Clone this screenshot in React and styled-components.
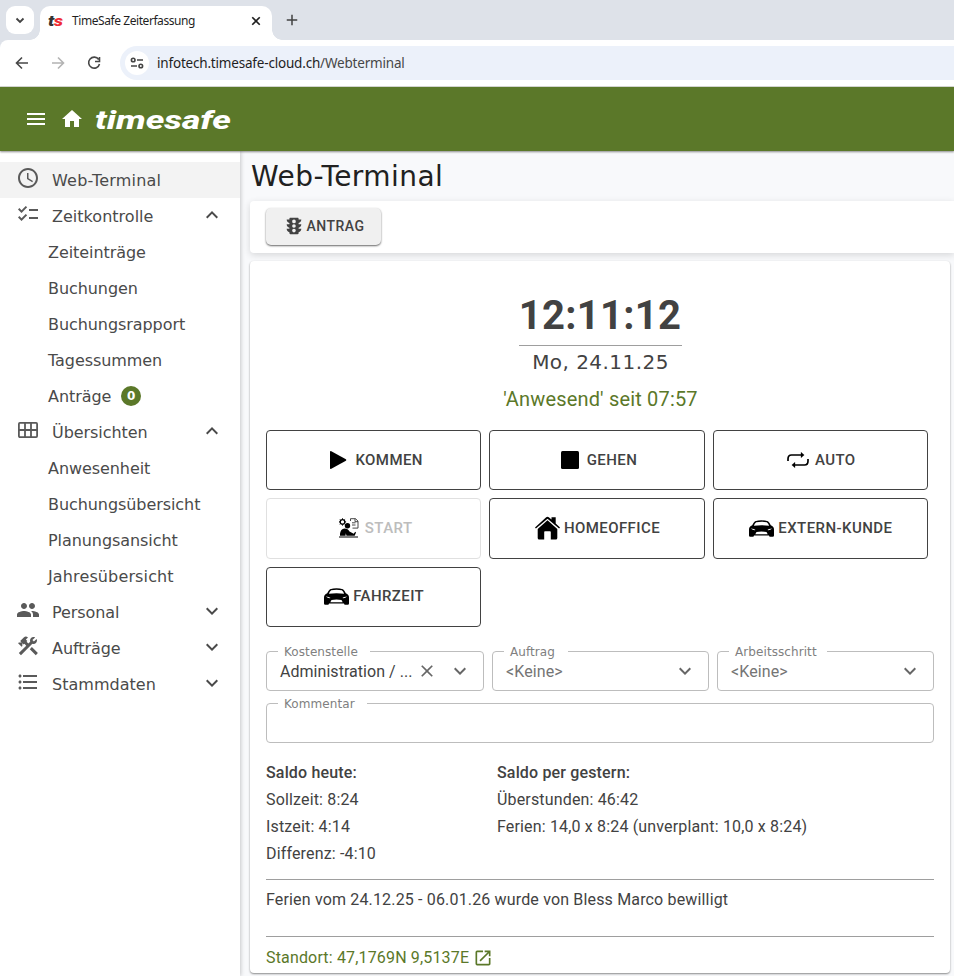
import React from "react";
import styled, { createGlobalStyle } from "styled-components";
import {
  MdAccessTime,
  MdChecklist,
  MdConstruction,
  MdExpandLess,
  MdExpandMore,
  MdFormatListBulleted,
  MdHome,
  MdMenu,
  MdOpenInNew,
  MdPeople,
  MdTraffic,
  MdClose,
} from "react-icons/md";

const GREEN = "#5b7829";

const GlobalStyle = createGlobalStyle`
  * { box-sizing: border-box; }
  body {
    margin: 0;
    overflow: hidden;
    background-color: #f8f9fb;
    color: #424242;
    font-family: Roboto, sans-serif;
  }
  svg { display: block; flex-shrink: 0; }
`;

const Page = styled.div`
  display: flex;
  flex-direction: column;
  height: 976px;
  overflow: hidden;
`;

/* browser chrome */

const TabStrip = styled.div`
  display: flex;
  height: 40px;
  padding: 6px 6px 0;
  background-color: #dee2e9;
`;

const TabSearch = styled.div`
  display: flex;
  align-items: center;
  justify-content: center;
  width: 28px;
  height: 28px;
  border-radius: 9px;
  background-color: white;
`;

const Tab = styled.div`
  position: relative;
  display: flex;
  align-items: center;
  width: 232px;
  height: 34px;
  margin-left: 6px;
  padding: 0 10px 5px 8px;
  border-radius: 10px 10px 0 0;
  background-color: white;
  font-family: "Noto Sans", sans-serif;
  font-size: 12px;
  color: #1f1f1f;

  &::before,
  &::after {
    content: "";
    position: absolute;
    bottom: 0;
    width: 10px;
    height: 10px;
  }
  &::before {
    left: -10px;
    background: radial-gradient(circle at 0 0, transparent 9.5px, white 10px);
  }
  &::after {
    right: -10px;
    background: radial-gradient(circle at 100% 0, transparent 9.5px, white 10px);
  }
`;

const Favicon = styled.span`
  display: flex;
  align-items: center;
  width: 16px;
  height: 20px;
  transform: scaleX(1.25);
  transform-origin: left;
  font-family: Roboto, sans-serif;
  font-size: 15px;
  font-style: italic;
  font-weight: 900;
  line-height: 20px;
  letter-spacing: -0.4px;
  color: #333;
`;

const FaviconAccent = styled.span`
  color: #ee2b33;
`;

const TabTitle = styled.span`
  flex-grow: 1;
  margin-left: 8px;
  letter-spacing: -0.43px;
`;

const NewTab = styled.div`
  display: flex;
  align-items: center;
  height: 28px;
  margin-left: 14px;
`;

const ToolbarBack = styled.div`
  height: 47px;
  background-color: #dee2e9;
`;

const Toolbar = styled.div`
  display: flex;
  align-items: center;
  height: 47px;
  padding-left: 14px;
  border-bottom: 1px solid #d9dbd6;
  border-top-left-radius: 8px;
  background-color: white;
`;

const NavIcon = styled.div`
  width: 16px;
  margin-right: 20px;
  color: ${(props) => (props.$disabled ? "#b3b3b3" : "#474747")};
`;

const AddressBar = styled.div`
  display: flex;
  align-items: center;
  flex-grow: 1;
  height: 34px;
  margin-left: -2px;
  padding-left: 5px;
  border-radius: 17px 0 0 17px;
  background-color: #ecf1fa;
  font-family: "Noto Sans", sans-serif;
  font-size: 13.5px;
  letter-spacing: -0.19px;
  color: #1f1f1f;
`;

const SiteInfo = styled.div`
  display: flex;
  align-items: center;
  justify-content: center;
  width: 24px;
  height: 24px;
  margin-right: 8px;
  border-radius: 50%;
  background-color: white;
`;

const UrlPath = styled.span`
  color: #474747;
`;

/* application */

const HeaderBar = styled.header`
  display: flex;
  align-items: center;
  flex-shrink: 0;
  height: 64px;
  padding-left: 24px;
  background-color: ${GREEN};
  color: white;
  box-shadow: 0 1px 2px rgba(0, 0, 0, 0.45);
  z-index: 2;
`;

const HomeButton = styled.div`
  margin: 0 10px 0 12px;
`;

const Body = styled.div`
  display: flex;
  flex-grow: 1;
  min-height: 0;
`;

const Sidebar = styled.nav`
  width: 240px;
  flex-shrink: 0;
  padding-top: 11px;
  background-color: white;
  box-shadow: 1px 0 4px rgba(0, 0, 0, 0.2);
`;

const SidebarRow = styled.div`
  display: flex;
  align-items: center;
  height: 36px;
  padding: 0 16px;
  padding-left: ${(props) => (props.$child ? 48 : 16)}px;
  background-color: ${(props) => (props.$active ? "#f3f3f3" : "transparent")};
  font-family: "DejaVu Sans", Verdana, sans-serif;
  font-size: 16px;
  color: #4a4a4a;
`;

const SidebarIcon = styled.div`
  width: 24px;
  height: 28px;
  margin-right: 12px;
  color: #5a5a5a;
`;

const SidebarLabel = styled.span`
  letter-spacing: ${(props) => props.$spacing || -0.07}px;
`;

const SidebarArrow = styled.div`
  height: 24px;
  margin: 0 0 3px auto;
`;

const Badge = styled.span`
  display: flex;
  align-items: center;
  justify-content: center;
  width: 20px;
  height: 20px;
  margin-left: 10px;
  border-radius: 50%;
  background-color: ${GREEN};
  color: white;
  font-size: 12px;
  font-weight: bold;
`;

const Main = styled.main`
  flex-grow: 1;
  min-width: 0;
  padding: 0 0 0 10px;
`;

const Title = styled.h1`
  height: 50px;
  margin: 0;
  padding-left: 1px;
  font-family: "DejaVu Sans", Verdana, sans-serif;
  font-size: 28px;
  font-weight: normal;
  line-height: 52px;
  letter-spacing: 0.45px;
  color: #212121;
`;

const ActionBar = styled.div`
  display: flex;
  height: 52px;
  padding: 7px 16px;
  border-radius: 4px 0 0 4px;
  background-color: white;
  box-shadow: 0 2px 7px rgba(0, 0, 0, 0.14);
`;

const RequestButton = styled.button`
  display: flex;
  align-items: center;
  justify-content: center;
  width: 115px;
  height: 37px;
  padding: 0 0 1px;
  border: 0;
  border-radius: 5px;
  background-color: #f0f0f0;
  box-shadow: 0 1px 2px rgba(0, 0, 0, 0.6);
  color: #424242;
  font-family: Roboto, sans-serif;
  font-size: 14px;
  font-weight: 500;
  letter-spacing: 0.45px;
  gap: 2px;
`;

const Card = styled.section`
  width: 700px;
  height: 712px;
  margin-top: 8px;
  padding: 0 16px;
  border-radius: 4px;
  background-color: white;
  box-shadow: 0 1px 2px rgba(0, 0, 0, 0.45);
`;

const Clock = styled.div`
  display: flex;
  flex-direction: column;
  align-items: center;
  height: 169px;
  padding-top: 25px;
`;

const Time = styled.div`
  width: 163px;
  height: 60px;
  border-bottom: 1px solid #9e9e9e;
  font-size: 40px;
  font-weight: bold;
  line-height: 60px;
  text-align: center;
  letter-spacing: 0.3px;
  white-space: nowrap;
`;

const DateLine = styled.div`
  padding-left: 1px;
  font-family: "DejaVu Sans", Verdana, sans-serif;
  font-size: 20px;
  line-height: 32px;
  letter-spacing: 0.45px;
`;

const Status = styled.div`
  margin-top: 4px;
  padding-left: 1px;
  font-size: 20px;
  line-height: 34px;
  letter-spacing: 0.17px;
  color: ${GREEN};
`;

const ButtonGrid = styled.div`
  display: grid;
  grid-template-columns: repeat(3, 1fr);
  grid-auto-rows: 60.4px;
  gap: 8px;
  width: 662px;
`;

const BookingButton = styled.button`
  display: flex;
  align-items: center;
  justify-content: center;
  gap: ${(props) => props.$gap}px;
  padding: 0 0 1px ${(props) => props.$indent}px;
  border: 1px solid ${(props) => (props.disabled ? "#e0e0e0" : "#424242")};
  border-radius: 4px;
  background-color: white;
  color: ${(props) => (props.disabled ? "#bdbdbd" : "#424242")};
  font-family: Roboto, sans-serif;
  font-size: 15px;
  font-weight: 500;
  letter-spacing: 0.42px;

  svg {
    color: black;
  }
`;

const Fields = styled.div`
  display: grid;
  grid-template-columns: 218px 217px 217px;
  gap: 6px 8px;
  margin-top: 18px;
`;

const Outline = styled.fieldset`
  display: flex;
  align-items: flex-start;
  min-width: 0;
  height: 46px;
  margin: 0;
  padding: 0 11px;
  border: 1px solid #bdbdbd;
  border-radius: 4px;
  grid-column: ${(props) => (props.$wide ? "1 / -1" : "auto")};
`;

const Legend = styled.legend`
  width: ${(props) => props.$width}px;
  height: 12px;
  padding: 0 6px;
  font-family: "DejaVu Sans", Verdana, sans-serif;
  font-size: 12px;
  line-height: 14px;
  letter-spacing: 0.08px;
  white-space: nowrap;
  color: #808080;
`;

const FieldRow = styled.div`
  display: flex;
  align-items: center;
  width: 100%;
  height: 28px;
  padding-left: 2px;
`;

const FieldValue = styled.span`
  flex-grow: 1;
  font-size: 16px;
  letter-spacing: ${(props) => (props.$empty ? 0.1 : 0.04)}px;
  white-space: nowrap;
  color: ${(props) => (props.$empty ? "#757575" : "#424242")};
`;

const FieldIcon = styled.div`
  margin-left: ${(props) => props.$gap || 0}px;
  color: #666;
`;

const Balances = styled.div`
  display: grid;
  grid-template-columns: 231px 1fr;
  height: 121px;
  margin-top: 16px;
  border-bottom: 1px solid #9e9e9e;
  font-size: 16px;
  line-height: 27px;
  letter-spacing: 0.16px;
`;

const Heading = styled.div`
  font-weight: 500;
`;

const Message = styled.div`
  height: 57px;
  border-bottom: 1px solid #9e9e9e;
  font-size: 16px;
  line-height: 40px;
  letter-spacing: 0.16px;
`;

const Location = styled.div`
  display: flex;
  align-items: center;
  height: 41px;
  font-size: 16px;
  letter-spacing: 0.16px;
  color: ${GREEN};
  gap: 4px;
`;

const Logo = () => (
  <svg width="138" height="28" viewBox="0 0 138 28">
    <text
      x="1"
      y="23.5"
      fill="white"
      fontFamily="Roboto"
      fontSize="25"
      fontWeight="800"
      fontStyle="italic"
      textLength="136"
      lengthAdjust="spacingAndGlyphs"
    >
      timesafe
    </text>
  </svg>
);

const Stroke = ({ size = 16, width = 1.8, d }) => (
  <svg width={size} height={size} viewBox="0 0 16 16" fill="none" stroke="currentColor" strokeWidth={width}>
    <path d={d} />
  </svg>
);

const TuneIcon = () => (
  <svg width="14" height="14" viewBox="0 0 14 14" fill="none" stroke="#444" strokeWidth="1.6">
    <circle cx="3.2" cy="4" r="1.8" />
    <path d="M7 4h6M1 10h6" />
    <circle cx="10.8" cy="10" r="1.8" />
  </svg>
);

const ModuleIcon = () => (
  <svg width="24" height="24" viewBox="0 0 24 24" fill="none" stroke="currentColor" strokeWidth="1.8">
    <rect x="2.900" y="4.900" width="18.200" height="14.200" rx="1" />
    <path d="M9 5v14M15 5v14M3 12h18" />
  </svg>
);

const PlayIcon = () => (
  <svg width="20" height="20" viewBox="0 0 20 20" fill="currentColor">
    <path d="M2 2q0-1.4 1.3-.8l14.6 8q1 .8 0 1.6l-14.6 8Q2 19.4 2 18z" />
  </svg>
);

const StopIcon = () => (
  <svg width="18" height="18" viewBox="0 0 18 18" fill="currentColor">
    <rect width="18" height="18" rx="1.5" />
  </svg>
);

const LoopIcon = () => (
  <svg width="22" height="18" viewBox="0 0 22 18" fill="none" stroke="currentColor" strokeWidth="1.7">
    <path d="M1 10V8q0-4 3.500-4H16M21 8v2q0 4-3.500 4H6" />
    <path d="M14 1.300 17.200 4 14 6.700zM8 11.300 4.800 14 8 16.700z" fill="currentColor" strokeWidth=".3" />
  </svg>
);

const CarIcon = () => (
  <svg width="25" height="17" viewBox="0 0 25 17" fill="currentColor">
    <path
      fillRule="evenodd"
      d="M6 1.200Q12.500-.6 19 1.200q1.700 1.500 2.800 4.100Q25 6.500 25 9.500v6q0 1.300-1.300 1.300h-2.500q-1.200 0-1.200-1.300H5q0 1.300-1.200 1.300H1.300Q0 16.800 0 15.500v-6Q0 6.500 3.200 5.300 4.300 2.700 6 1.200zM7.200 2.300Q5.500 3.700 4.900 5.700q7.600-.8 15.200 0-.6-2-2.300-3.400-5.300-1.200-10.600 0zM1.800 8.400q2.200 2 4.700 1.700-.9-1.700-4.700-1.700zM23.200 8.400q-3.800 0-4.700 1.700 2.500.3 4.700-1.700zM7.500 12 6.300 14.200h12.400L17.500 12q-5-1-10 0z"
    />
  </svg>
);

const HouseIcon = () => (
  <svg width="25" height="24" viewBox="0 0 25 24" fill="currentColor">
    <path d="M12.500 4.200 22.300 13V22q0 1.500-1.500 1.500h-5V16q0-.8-.8-.8h-5q-.8 0-.8.8v7.500H4.200q-1.500 0-1.500-1.500v-9z" />
    <path d="M0 11.600 11.200 1.200q1.300-1 2.600 0l2.700 2.400V1.200h4.200v6.200l4.300 4.200-.9 1L12.500 2.700.9 12.600z" />
  </svg>
);

const WorkIcon = () => (
  <svg width="20" height="20" viewBox="0 0 20 20" fill="currentColor">
    <circle cx="3.500" cy="3.900" r="2.300" fill="none" stroke="currentColor" strokeWidth="1.300" />
    <path
      d="M3.500.3v1.300M3.500 6.300v1.300M0 3.900h1.200M5.900 3.900h1.200M1 1.400l.9.900M5.200 5.600l.9.900M1 6.400l.9-.9M5.200 2.200l.9-.9"
      stroke="currentColor"
      strokeWidth="1"
    />
    <circle cx="8.500" cy="7.700" r="2.700" />
    <path d="M1 17.800v-2Q1.500 11 5.500 10.500q3.500 0 5 3l4.200 2.300 1.500-2 .8.600-1.300 3.400H7.500l-.7-2.600-.3 2.600zM0 18.600h19v1H0z" />
    <path d="M11.500 3V.7h5l2.500 2.400v7h-5.500M16 .7v3h3M13 4.800h3.500M13 7h3.500" fill="none" stroke="#333" strokeWidth=".9" />
  </svg>
);

const MENU = [
  { label: "Web-Terminal", icon: MdAccessTime, active: true, spacing: 0.2 },
  { label: "Zeitkontrolle", icon: MdChecklist, arrow: "up", spacing: 0.02 },
  { label: "Zeiteinträge" },
  { label: "Buchungen" },
  { label: "Buchungsrapport" },
  { label: "Tagessummen" },
  { label: "Anträge", badge: 0 },
  { label: "Übersichten", icon: ModuleIcon, arrow: "up" },
  { label: "Anwesenheit" },
  { label: "Buchungsübersicht" },
  { label: "Planungsansicht" },
  { label: "Jahresübersicht", spacing: 0.13 },
  { label: "Personal", icon: MdPeople, arrow: "down" },
  { label: "Aufträge", icon: MdConstruction, arrow: "down" },
  { label: "Stammdaten", icon: MdFormatListBulleted, arrow: "down", spacing: 0.02 },
];

const BOOKINGS = [
  { label: "KOMMEN", icon: PlayIcon, gap: 7, indent: 4 },
  { label: "GEHEN", icon: StopIcon, gap: 8, indent: 4 },
  { label: "AUTO", icon: LoopIcon, gap: 6, indent: 2 },
  { label: "START", icon: WorkIcon, gap: 6, indent: 4, disabled: true },
  { label: "HOMEOFFICE", icon: HouseIcon, gap: 4, indent: 1 },
  { label: "EXTERN-KUNDE", icon: CarIcon, gap: 4, indent: 1 },
  { label: "FAHRZEIT", icon: CarIcon, gap: 4, indent: 1 },
];

const BrowserBar = () => (
  <React.Fragment>
    <TabStrip>
      <TabSearch>
        <Stroke d="M4.500 6.500 8 10l3.500-3.500" />
      </TabSearch>
      <Tab>
        <Favicon>
          t<FaviconAccent>s</FaviconAccent>
        </Favicon>
        <TabTitle>TimeSafe Zeiterfassung</TabTitle>
        <Stroke size={12} width={2.200} d="M3 3l10 10M13 3 3 13" />
      </Tab>
      <NewTab>
        <Stroke size={12} width={2} d="M8 1v14M1 8h14" />
      </NewTab>
    </TabStrip>
    <ToolbarBack>
      <Toolbar>
        <NavIcon>
          <Stroke d="M14 8H3M8 2.500 2.500 8 8 13.500" width={1.600} />
        </NavIcon>
        <NavIcon $disabled>
          <Stroke d="M2 8h11M8 2.500 13.500 8 8 13.500" width={1.600} />
        </NavIcon>
        <NavIcon>
          <Stroke d="M12.700 4.500A5.500 5.500 0 1 0 13.500 9M13.500 2v4.500H9" width={1.600} />
        </NavIcon>
        <AddressBar>
          <SiteInfo>
            <TuneIcon />
          </SiteInfo>
          infotech.timesafe-cloud.ch<UrlPath>/Webterminal</UrlPath>
        </AddressBar>
      </Toolbar>
    </ToolbarBack>
  </React.Fragment>
);

const NavigationMenu = () => (
  <Sidebar>
    {MENU.map(({ label, icon: Icon, active, arrow, badge, spacing }) => (
      <SidebarRow key={label} $active={active} $child={!Icon}>
        {Icon && (
          <SidebarIcon>
            <Icon size={24} />
          </SidebarIcon>
        )}
        <SidebarLabel $spacing={spacing}>{label}</SidebarLabel>
        {badge !== undefined && <Badge>{badge}</Badge>}
        {arrow && (
          <SidebarArrow>
            {arrow === "up" ? <MdExpandLess size={24} /> : <MdExpandMore size={24} />}
          </SidebarArrow>
        )}
      </SidebarRow>
    ))}
  </Sidebar>
);

const SelectField = ({ label, legendWidth, value, clearable }) => (
  <Outline>
    <Legend $width={legendWidth}>{label}</Legend>
    <FieldRow>
      <FieldValue $empty={!clearable}>{value}</FieldValue>
      {clearable && (
        <FieldIcon>
          <MdClose size={20} />
        </FieldIcon>
      )}
      <FieldIcon $gap={11}>
        <MdExpandMore size={24} />
      </FieldIcon>
    </FieldRow>
  </Outline>
);

const App = () => (
  <Page>
    <GlobalStyle />
    <BrowserBar />
    <HeaderBar>
      <MdMenu size={24} />
      <HomeButton>
        <MdHome size={24} />
      </HomeButton>
      <Logo />
    </HeaderBar>
    <Body>
      <NavigationMenu />
      <Main>
        <Title>Web-Terminal</Title>
        <ActionBar>
          <RequestButton>
            <MdTraffic size={22} />
            ANTRAG
          </RequestButton>
        </ActionBar>
        <Card>
          <Clock>
            <Time>12:11:12</Time>
            <DateLine>Mo, 24.11.25</DateLine>
            <Status>'Anwesend' seit 07:57</Status>
          </Clock>
          <ButtonGrid>
            {BOOKINGS.map(({ label, icon: Icon, gap, indent, disabled }) => (
              <BookingButton key={label} $gap={gap} $indent={indent} disabled={disabled}>
                <Icon />
                {label}
              </BookingButton>
            ))}
          </ButtonGrid>
          <Fields>
            <SelectField label="Kostenstelle" legendWidth={92} value="Administration / ..." clearable />
            <SelectField label="Auftrag" legendWidth={64} value="<Keine>" />
            <SelectField label="Arbeitsschritt" legendWidth={98} value="<Keine>" />
            <Outline $wide>
              <Legend $width={89}>Kommentar</Legend>
            </Outline>
          </Fields>
          <Balances>
            <div>
              <Heading>Saldo heute:</Heading>
              <div>Sollzeit: 8:24</div>
              <div>Istzeit: 4:14</div>
              <div>Differenz: -4:10</div>
            </div>
            <div>
              <Heading>Saldo per gestern:</Heading>
              <div>Überstunden: 46:42</div>
              <div>Ferien: 14,0 x 8:24 (unverplant: 10,0 x 8:24)</div>
            </div>
          </Balances>
          <Message>Ferien vom 24.12.25 - 06.01.26 wurde von Bless Marco bewilligt</Message>
          <Location>
            Standort: 47,1769N 9,5137E
            <MdOpenInNew size={20} />
          </Location>
        </Card>
      </Main>
    </Body>
  </Page>
);

export default App;
